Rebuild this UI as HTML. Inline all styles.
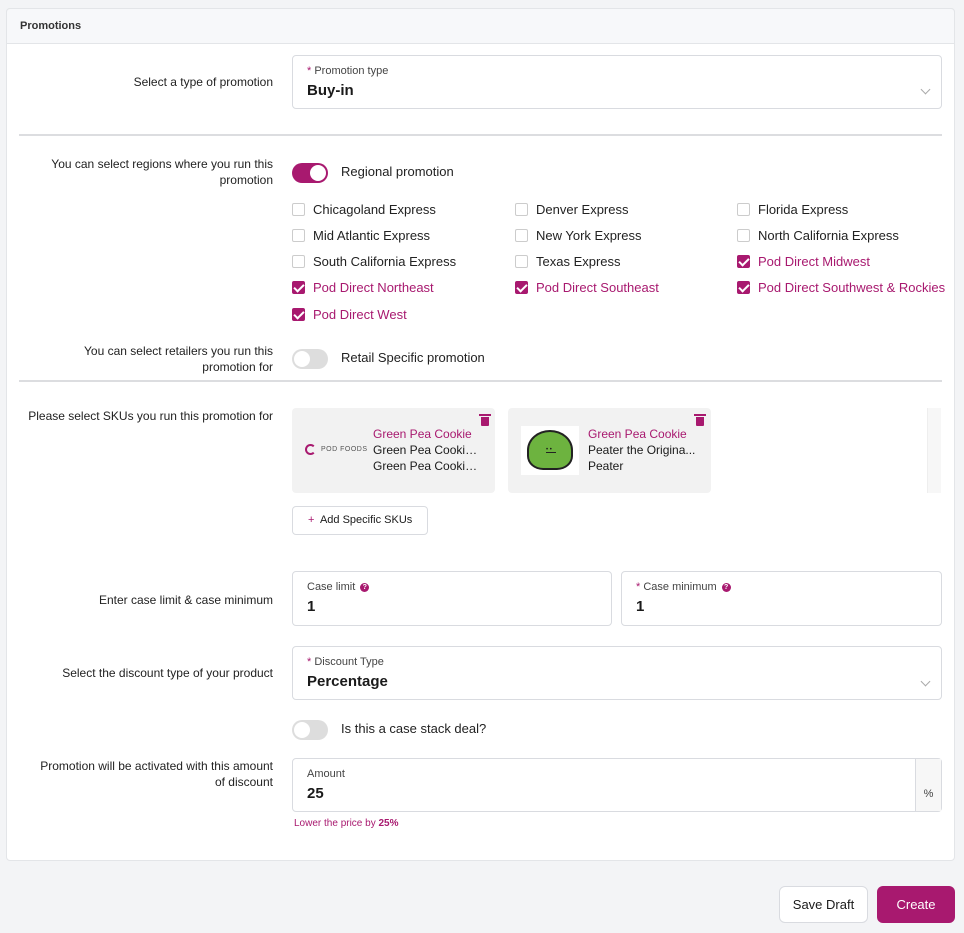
<!DOCTYPE html>
<html><head><style>
*{box-sizing:border-box;margin:0;padding:0}
body{width:964px;height:933px;background:#f3f4f6;font-family:"Liberation Sans",sans-serif;color:#1a1a1a;position:relative;overflow:hidden}
.a{position:absolute}
.card{left:6px;top:8px;width:949px;height:853px;background:#fff;border:1px solid #e3e5e8;border-radius:4px}
.hdr{left:6px;top:8px;width:949px;height:36px;background:#f7f8fa;border:1px solid #e3e5e8;border-radius:4px 4px 0 0;font-size:11px;font-weight:bold;padding:11px 13px;color:#333}
.lbl{right:691px;font-size:12px;text-align:right;color:#222;line-height:16px}
.inp{background:#fff;border:1px solid #d9dbe0;border-radius:4px}
.small{font-size:11px;color:#444}
.req{color:#a8196f}
.big{font-size:15px;font-weight:bold}
.hr{left:19px;width:923px;height:2px;background:#dcdde0}
.cb{width:13px;height:13px;border:1px solid #ccc;border-radius:2px;background:#fff}
.cb.on{background:#a8196f;border-color:#a8196f}
.cb.on::after{content:"";position:absolute;left:3px;top:0px;width:4px;height:8px;border:solid #fff;border-width:0 2px 2px 0;transform:rotate(45deg)}
.ct{font-size:13px;color:#222}
.ct.on{color:#a8196f}
.tg{width:36px;height:20px;border-radius:10px;background:#ddd}
.tg::after{content:"";position:absolute;top:2px;left:2px;width:16px;height:16px;border-radius:50%;background:#fff}
.tg.on{background:#a8196f}
.tg.on::after{left:18px}
.chev{width:7px;height:7px;border-right:1px solid #aaa;border-bottom:1px solid #aaa;transform:rotate(45deg)}
.sku{background:#f2f2f2;border-radius:4px;width:203px;height:85px;top:408px}
.st{font-size:12px;line-height:16px;width:108px;white-space:nowrap;overflow:hidden}
.st div{overflow:hidden;text-overflow:ellipsis}
.trash{width:8px;height:9px;background:#a8196f;border-radius:0 0 1px 1px}
.trash::before{content:"";position:absolute;left:-2px;top:-3px;width:12px;height:2px;background:#a8196f}
.btn{border-radius:6px;font-size:13px;text-align:center;line-height:35px}
.q{display:inline-block;width:9px;height:9px;border-radius:50%;background:#a8196f;color:#fff;font-size:7px;line-height:9px;text-align:center;font-weight:bold;vertical-align:1px;margin-left:5px}
</style></head><body>
<div class="a card"></div>
<div class="a hdr">Promotions</div>

<div class="a lbl" style="top:74px">Select a type of promotion</div>
<div class="a inp" style="left:292px;top:55px;width:650px;height:54px"></div>
<div class="a small" style="left:307px;top:65px"><span class="req">*</span> Promotion type</div>
<div class="a big" style="left:307px;top:82px">Buy-in</div>
<div class="a chev" style="left:922px;top:86px"></div>
<div class="a hr" style="top:134px"></div>

<div class="a lbl" style="top:156px">You can select regions where you run this<br>promotion</div>
<div class="a tg on" style="left:292px;top:163px"></div>
<div class="a ct" style="left:341px;top:164px">Regional promotion</div>

<div class="a cb" style="left:292px;top:203px"></div><div class="a ct" style="left:313px;top:202px">Chicagoland Express</div>
<div class="a cb" style="left:515px;top:203px"></div><div class="a ct" style="left:536px;top:202px">Denver Express</div>
<div class="a cb" style="left:737px;top:203px"></div><div class="a ct" style="left:758px;top:202px">Florida Express</div>
<div class="a cb" style="left:292px;top:229px"></div><div class="a ct" style="left:313px;top:228px">Mid Atlantic Express</div>
<div class="a cb" style="left:515px;top:229px"></div><div class="a ct" style="left:536px;top:228px">New York Express</div>
<div class="a cb" style="left:737px;top:229px"></div><div class="a ct" style="left:758px;top:228px">North California Express</div>
<div class="a cb" style="left:292px;top:255px"></div><div class="a ct" style="left:313px;top:254px">South California Express</div>
<div class="a cb" style="left:515px;top:255px"></div><div class="a ct" style="left:536px;top:254px">Texas Express</div>
<div class="a cb on" style="left:737px;top:255px"></div><div class="a ct on" style="left:758px;top:254px">Pod Direct Midwest</div>
<div class="a cb on" style="left:292px;top:281px"></div><div class="a ct on" style="left:313px;top:280px">Pod Direct Northeast</div>
<div class="a cb on" style="left:515px;top:281px"></div><div class="a ct on" style="left:536px;top:280px">Pod Direct Southeast</div>
<div class="a cb on" style="left:737px;top:281px"></div><div class="a ct on" style="left:758px;top:280px">Pod Direct Southwest &amp; Rockies</div>
<div class="a cb on" style="left:292px;top:308px"></div><div class="a ct on" style="left:313px;top:307px">Pod Direct West</div>

<div class="a lbl" style="top:343px">You can select retailers you run this<br>promotion for</div>
<div class="a tg" style="left:292px;top:349px"></div>
<div class="a ct" style="left:341px;top:350px">Retail Specific promotion</div>
<div class="a hr" style="top:380px"></div>

<div class="a lbl" style="top:408px">Please select SKUs you run this promotion for</div>
<div class="a sku" style="left:292px"></div>
<div class="a" style="left:305px;top:444px;width:11px;height:11px;border:2px solid #a8196f;border-radius:50%;border-right-color:transparent"></div>
<div class="a" style="left:321px;top:446px;font-size:7px;color:#555;letter-spacing:0.5px">POD FOODS</div>
<div class="a st" style="left:373px;top:426px"><div style="color:#a8196f">Green Pea Cookie</div><div>Green Pea Cookie ...</div><div>Green Pea Cookie ...</div></div>
<div class="a trash" style="left:481px;top:417px"></div>
<div class="a sku" style="left:508px"></div>
<div class="a" style="left:521px;top:426px;width:58px;height:49px;background:#fff"></div>
<div class="a" style="left:527px;top:430px;width:46px;height:40px;background:#6db33f;border:2px solid #222;border-radius:50% 50% 35% 35%"></div>
<div class="a" style="left:546px;top:449px;width:10px;height:4px;border-bottom:1px solid #222;font-size:6px;line-height:3px">• •</div>
<div class="a st" style="left:588px;top:426px"><div style="color:#a8196f">Green Pea Cookie</div><div>Peater the Origina...</div><div>Peater</div></div>
<div class="a trash" style="left:696px;top:417px"></div>
<div class="a" style="left:927px;top:408px;width:14px;height:85px;background:#f7f7f7;border-left:1px solid #eee"></div>
<div class="a inp" style="left:292px;top:506px;width:136px;height:29px;font-size:11px;line-height:27px;padding-left:15px"><span style="color:#a8196f">+</span>&nbsp; Add Specific SKUs</div>

<div class="a lbl" style="top:592px">Enter case limit &amp; case minimum</div>
<div class="a inp" style="left:292px;top:571px;width:320px;height:55px"></div>
<div class="a small" style="left:307px;top:581px">Case limit<span class="q">?</span></div>
<div class="a big" style="left:307px;top:598px">1</div>
<div class="a inp" style="left:621px;top:571px;width:321px;height:55px"></div>
<div class="a small" style="left:636px;top:581px"><span class="req">*</span> Case minimum<span class="q">?</span></div>
<div class="a big" style="left:636px;top:598px">1</div>

<div class="a lbl" style="top:665px">Select the discount type of your product</div>
<div class="a inp" style="left:292px;top:646px;width:650px;height:54px"></div>
<div class="a small" style="left:307px;top:656px"><span class="req">*</span> Discount Type</div>
<div class="a big" style="left:307px;top:673px">Percentage</div>
<div class="a chev" style="left:922px;top:678px"></div>

<div class="a tg" style="left:292px;top:720px"></div>
<div class="a ct" style="left:341px;top:721px">Is this a case stack deal?</div>

<div class="a lbl" style="top:758px">Promotion will be activated with this amount<br>of discount</div>
<div class="a inp" style="left:292px;top:758px;width:650px;height:54px"></div>
<div class="a" style="left:915px;top:759px;width:26px;height:52px;background:#f7f7f7;border-left:1px solid #d9dbe0;font-size:11px;color:#444;text-align:center;padding-top:29px">%</div>
<div class="a small" style="left:307px;top:768px">Amount</div>
<div class="a big" style="left:307px;top:785px">25</div>
<div class="a" style="left:294px;top:818px;font-size:10px;color:#a8196f">Lower the price by <b>25%</b></div>

<div class="a btn" style="left:779px;top:886px;width:89px;height:37px;background:#fff;border:1px solid #d9dbe0">Save Draft</div>
<div class="a btn" style="left:877px;top:886px;width:78px;height:37px;background:#a8196f;color:#fff;line-height:37px">Create</div>
</body></html>
